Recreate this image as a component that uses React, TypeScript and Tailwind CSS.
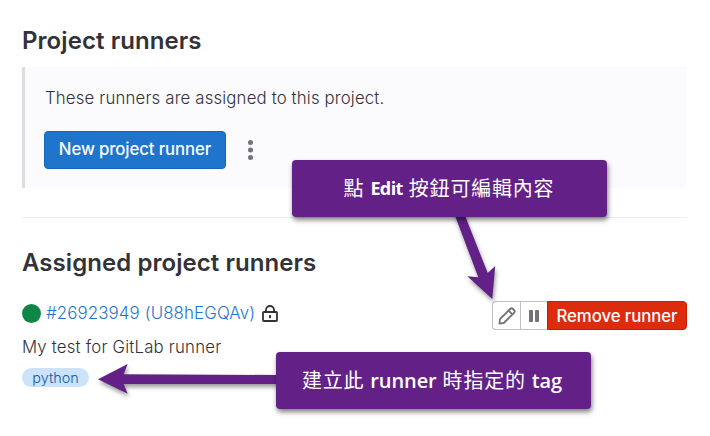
import React from "react";

const CJK = "font-['Open_Sans','Noto_Sans_CJK_TC',sans-serif]";

function Lock() {
  return (
    <svg className="ml-[7px] mt-px h-[18px] w-4" viewBox="0 0 16 18" fill="none">
      <rect x="1" y="7" width="14" height="9" rx="0.8" stroke="#333238" strokeWidth="1.8" />
      <path d="M4 7V5a4 4 0 0 1 8 0V7" stroke="#333238" strokeWidth="1.8" />
      <rect x="7" y="10" width="2" height="3.2" rx="0.6" fill="#333238" />
    </svg>
  );
}

function Pencil() {
  return (
    <svg className="h-[18px] w-[18px]" viewBox="0 0 18 18" fill="none" stroke="#737278" strokeWidth="1.8" strokeLinejoin="round">
      <path d="M1.4 16.6l.6-4.4L12.2 2a2 2 0 0 1 2.8 0l1 1a2 2 0 0 1 0 2.8L5.8 16z" />
      <path d="M10.6 3.6l3.8 3.8" />
    </svg>
  );
}

function Arrows() {
  return (
    <svg className="pointer-events-none absolute inset-0 h-[436px] w-[710px] drop-shadow-[1px_3px_2px_rgba(0,0,0,0.4)]" viewBox="0 0 710 436" fill="#632187">
      <path d="M454 213h10L487.7 273l7.5-7L492.3 299 467.3 276.3l11 1z" />
      <path d="M98 379.3L127.7 364l-4 10.2L280 375v9H123.7l4 9.7z" />
    </svg>
  );
}

export default function App() {
  return (
    <main className="relative h-[436px] w-[710px] overflow-hidden bg-white pl-[22px] pr-[23px] pt-[25px] font-['Inter',sans-serif] text-[#333238]">
      <h1 className="h-[42px] whitespace-nowrap text-[24px] font-semibold leading-[32px] tracking-[0.07px]">Project runners</h1>

      <section className="h-[121px] border-l-[3px] border-[#dcdcde] bg-[#fbfafd] pl-[19px] pt-[19px]">
        <p className="h-[45px] whitespace-nowrap pl-px text-[16.8px] font-[350] leading-6 tracking-[0.15px]">These runners are assigned to this project.</p>
        <div className="flex items-center">
          <button className="h-[38px] w-[182px] whitespace-nowrap rounded-[4px] border border-[#1068bf] bg-[#1f75cb] pb-[2px] text-[16.8px] font-medium leading-[34px] tracking-[-0.12px] text-white">
            New project runner
          </button>
          <svg className="ml-[22px] h-5 w-[5px]" viewBox="0 0 5 20" fill="#737278">
            <circle cx="2.5" cy="2.5" r="2.5" />
            <circle cx="2.5" cy="10" r="2.5" />
            <circle cx="2.5" cy="17.5" r="2.5" />
          </svg>
        </div>
      </section>

      <section className="mt-[29px] border-t border-[#ececef] pt-[29px]">
        <h2 className="whitespace-nowrap text-[24px] font-semibold leading-[32px] tracking-[0.06px]">Assigned project runners</h2>
        <div className="mt-[22px] flex h-[30px] justify-between">
          <div className="flex h-6 items-center">
            <span className="h-[19px] w-[19px] rounded-full bg-[#108548]" />
            <a className="ml-[5px] whitespace-nowrap text-[16.9px] font-[350] leading-6 tracking-[0.1px] text-[#1f75cb]">#26923949 (U88hEGQAv)</a>
            <Lock />
          </div>
          <div className="flex h-[29px]">
            <button className="flex w-[28px] items-center justify-center rounded-l-[4px] border border-r-0 border-[#bfbfc3]">
              <Pencil />
            </button>
            <button className="flex w-[27px] items-center justify-center gap-[2px] border border-r-0 border-[#bfbfc3]">
              <span className="h-3 w-1 rounded-[1px] bg-[#737278]" />
              <span className="h-3 w-1 rounded-[1px] bg-[#737278]" />
            </button>
            <button className="w-[140px] whitespace-nowrap rounded-r-[4px] border border-[#c91c00] bg-[#dd2b0e] text-[16.8px] font-medium leading-[26px] tracking-[-0.08px] text-white">
              Remove runner
            </button>
          </div>
        </div>
        <p className="mt-[4px] whitespace-nowrap text-[16.8px] font-[350] leading-6 tracking-[0.19px]">My test for GitLab runner</p>
        <span className="mt-[9px] flex h-[19px] w-[67px] items-center justify-center rounded-full bg-[#cbe2f9] text-[14.4px] font-[350] leading-[19px] text-[#0b5cad]">python</span>
      </section>

      <Arrows />
      <div className={`absolute left-[292px] top-[160px] flex h-[57px] w-[315px] items-center justify-center whitespace-pre rounded-[4px] bg-[#632187] pr-px text-[20px] text-white shadow-[1px_3px_5px_rgba(0,0,0,0.5)] ${CJK}`}>
        <span className="tracking-[0.8px]">點 </span><b className="text-[18px] tracking-[-0.6px]">Edit</b><span className="tracking-[0.8px]"> 按鈕可編輯內容</span>
      </div>
      <div className={`absolute left-[276px] top-[352px] flex h-[57px] w-[315px] items-center justify-center whitespace-pre rounded-[4px] bg-[#632187] pr-[3px] text-[20px] text-white shadow-[1px_3px_5px_rgba(0,0,0,0.5)] ${CJK}`}>
        <span className="tracking-[0.8px]">建立此 </span><span className="font-semibold tracking-[-0.1px]">runner</span><span className="tracking-[0.8px]"> 時指定的 </span><span className="font-semibold tracking-[-0.1px]">tag</span>
      </div>
    </main>
  );
}
